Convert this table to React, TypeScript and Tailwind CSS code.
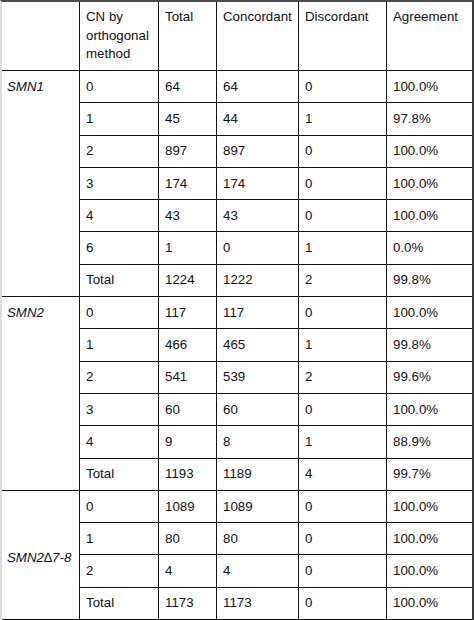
import React from "react";

type Row = [string, string, string, string, string];

const groups: { label: React.ReactNode; center?: boolean; rows: Row[] }[] = [
  {
    label: "SMN1",
    rows: [
      ["0", "64", "64", "0", "100.0%"],
      ["1", "45", "44", "1", "97.8%"],
      ["2", "897", "897", "0", "100.0%"],
      ["3", "174", "174", "0", "100.0%"],
      ["4", "43", "43", "0", "100.0%"],
      ["6", "1", "0", "1", "0.0%"],
      ["Total", "1224", "1222", "2", "99.8%"],
    ],
  },
  {
    label: "SMN2",
    rows: [
      ["0", "117", "117", "0", "100.0%"],
      ["1", "466", "465", "1", "99.8%"],
      ["2", "541", "539", "2", "99.6%"],
      ["3", "60", "60", "0", "100.0%"],
      ["4", "9", "8", "1", "88.9%"],
      ["Total", "1193", "1189", "4", "99.7%"],
    ],
  },
  {
    label: "SMN2\u22067-8",
    center: true,
    rows: [
      ["0", "1089", "1089", "0", "100.0%"],
      ["1", "80", "80", "0", "100.0%"],
      ["2", "4", "4", "0", "100.0%"],
      ["Total", "1173", "1173", "0", "100.0%"],
    ],
  },
];

const widths = ["w-[79px]", "w-[58px]", "w-[82px]", "w-[88px]", "flex-1"];

export default function App() {
  return (
    <div
      className="w-[474px] h-[620px] bg-white overflow-hidden flex flex-col border-t-2 border-t-[#4a4a4a] border-l-[2px] border-l-[#dcdcdc] border-r-2 border-r-[#3a3a3a] text-[13.3px] text-[#111]"
      style={{ fontFamily: '"Liberation Sans", Arial, sans-serif' }}
    >
      {/* header */}
      <div className="flex h-[68px] shrink-0">
        <div className="w-[77px] shrink-0" />
        <div className="w-[79px] shrink-0 border-l border-[#111] pl-[6px] pt-[6px] leading-[18.5px]">
          CN by
          <br />
          orthogonal
          <br />
          method
        </div>
        <div className="w-[58px] shrink-0 border-l border-[#111] pl-[6px] pt-[6px] leading-[18.5px]">
          Total
        </div>
        <div className="w-[82px] shrink-0 border-l border-[#111] pl-[6px] pt-[6px] leading-[18.5px]">
          Concordant
        </div>
        <div className="w-[88px] shrink-0 border-l border-[#111] pl-[6px] pt-[6px] leading-[18.5px]">
          Discordant
        </div>
        <div className="flex-1 border-l border-[#111] pl-[6px] pt-[6px] leading-[18.5px]">
          Agreement
        </div>
      </div>
      {groups.map((g, gi) => (
        <div key={gi} className="flex border-t border-[#111] shrink-0">
          <div
            className={
              "w-[77px] shrink-0 pl-[5px] italic flex " +
              (g.center ? "items-center pt-[7px]" : "items-start")
            }
          >
            <div className="h-[31.3px] flex items-center">{g.label}</div>
          </div>
          <div className="flex-1 flex flex-col">
            {g.rows.map((r, ri) => (
              <div
                key={ri}
                className={
                  "flex shrink-0 " + (ri > 0 ? "h-[32.3px] border-t border-[#111]" : "h-[31.3px]")
                }
              >
                {r.map((c, ci) => (
                  <div
                    key={ci}
                    className={
                      (ci === 0 ? "w-[79px] shrink-0 " : ci < 4 ? widths[ci] + " shrink-0 " : "flex-1 ") +
                      "border-l border-[#111] pl-[6px] flex items-center"
                    }
                  >
                    {c}
                  </div>
                ))}
              </div>
            ))}
          </div>
        </div>
      ))}
      <div className="flex-1 border-t border-[#111] bg-[#b4b4b4]" />
    </div>
  );
}
